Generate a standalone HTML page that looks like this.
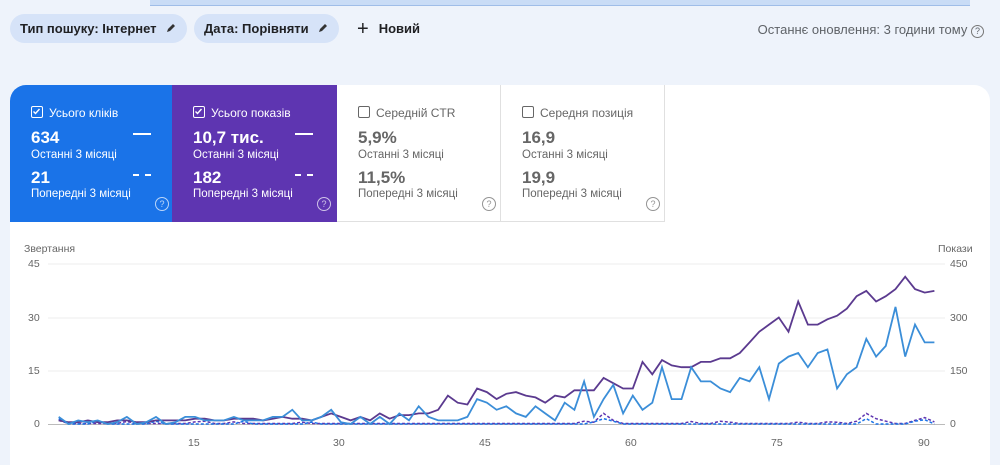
<!DOCTYPE html><html><head><meta charset="utf-8"><style>
*{margin:0;padding:0;box-sizing:border-box}
body{width:1000px;height:456px;overflow:hidden;background:#eef3fb;font-family:"Liberation Sans",sans-serif;position:relative}
.band{position:absolute;left:150px;top:0;width:820px;height:6px;background:#c9dcf6;border-bottom:1px solid #9fbde8}
.chip{position:absolute;top:14px;height:29px;border-radius:15px;background:#d6e3f8;font-size:13px;font-weight:bold;color:#202124;line-height:29px;padding-left:10px}
.chip svg{position:absolute;right:10px;top:8px}
.card{position:absolute;left:10px;top:85px;width:980px;height:380px;background:#fff;border-radius:16px 16px 0 0}
.m{position:absolute;top:85px;height:137px;width:165px;font-size:11.5px}
.m .l{position:absolute;left:21px;top:21px;font-size:12px}
.m .cb{display:inline-block;width:12px;height:12px;border:1.5px solid currentColor;border-radius:2px;vertical-align:-1px;margin-right:6px;position:relative}
.m .cb svg{position:absolute;left:0;top:0}
.m .v{position:absolute;left:21px;font-size:17px;font-weight:bold}
.m .s{position:absolute;left:21px}
.m .q{position:absolute;left:145px;top:112px;width:14px;height:14px;border:1px solid currentColor;border-radius:50%;font-size:9px;text-align:center;line-height:12px;opacity:.7}
.m .dash{position:absolute;left:123px;width:18px;height:2px;background:#fff}
.ax{position:absolute;font-size:10.5px;color:#666}
</style></head><body>
<div class="band"></div>
<div class="chip" style="left:10px;width:177px">Тип пошуку: Інтернет<svg width="12" height="12" viewBox="0 0 12 12"><path d="M2 10l1-3 5-5 2 2-5 5z" fill="#333"/></svg></div>
<div class="chip" style="left:194px;width:145px">Дата: Порівняти<svg width="12" height="12" viewBox="0 0 12 12"><path d="M2 10l1-3 5-5 2 2-5 5z" fill="#333"/></svg></div>
<div style="position:absolute;left:357px;top:14px;line-height:29px;font-size:13px;font-weight:bold;color:#202124"><span style="font-size:20px;font-weight:normal;vertical-align:-2px;margin-right:10px">+</span>Новий</div>
<div style="position:absolute;right:16px;top:22px;font-size:13px;color:#5f6368">Останнє оновлення: 3 години тому <span style="display:inline-block;width:13px;height:13px;border:1px solid #777;border-radius:50%;font-size:9px;text-align:center;line-height:11px">?</span></div>
<div class="card"></div>
<div class="m" style="left:10px;background:#1a73e8;color:#fff;border-radius:16px 0 0 0;width:162px">
<div class="l"><span class="cb"><svg width="9" height="9" viewBox="0 0 9 9"><path d="M1.5 4.5l2 2 4-4.5" stroke="#fff" stroke-width="1.4" fill="none"/></svg></span>Усього кліків</div>
<div class="v" style="top:43px">634</div><div class="dash" style="top:48px"></div>
<div class="s" style="top:64px">Останні 3 місяці</div>
<div class="v" style="top:83px">21</div><div class="dash" style="top:89px;background:none;border-top:2px dashed #fff"></div>
<div class="s" style="top:103px">Попередні 3 місяці</div><div class="q">?</div></div>
<div class="m" style="left:172px;background:#5e35b1;color:#fff">
<div class="l"><span class="cb"><svg width="9" height="9" viewBox="0 0 9 9"><path d="M1.5 4.5l2 2 4-4.5" stroke="#fff" stroke-width="1.4" fill="none"/></svg></span>Усього показів</div>
<div class="v" style="top:43px">10,7 тис.</div><div class="dash" style="top:48px"></div>
<div class="s" style="top:64px">Останні 3 місяці</div>
<div class="v" style="top:83px">182</div><div class="dash" style="top:89px;background:none;border-top:2px dashed #fff"></div>
<div class="s" style="top:103px">Попередні 3 місяці</div><div class="q">?</div></div>
<div class="m" style="left:337px;color:#666;border-right:1px solid #e0e0e0;border-bottom:1px solid #e0e0e0;width:164px">
<div class="l"><span class="cb"></span>Середній CTR</div>
<div class="v" style="top:43px">5,9%</div>
<div class="s" style="top:64px">Останні 3 місяці</div>
<div class="v" style="top:83px">11,5%</div>
<div class="s" style="top:103px">Попередні 3 місяці</div><div class="q">?</div></div>
<div class="m" style="left:501px;color:#666;border-right:1px solid #e0e0e0;border-bottom:1px solid #e0e0e0;width:164px">
<div class="l"><span class="cb"></span>Середня позиція</div>
<div class="v" style="top:43px">16,9</div>
<div class="s" style="top:64px">Останні 3 місяці</div>
<div class="v" style="top:83px">19,9</div>
<div class="s" style="top:103px">Попередні 3 місяці</div><div class="q">?</div></div>
<div class="ax" style="left:24px;top:243px">Звертання</div>
<div class="ax" style="left:938px;top:243px">Покази</div>
<div class="ax" style="left:28px;top:258px">45</div><div class="ax" style="left:28px;top:312px">30</div><div class="ax" style="left:28px;top:365px">15</div><div class="ax" style="left:34px;top:418px">0</div>
<div class="ax" style="left:950px;top:258px">450</div><div class="ax" style="left:950px;top:312px">300</div><div class="ax" style="left:950px;top:365px">150</div><div class="ax" style="left:950px;top:418px">0</div>
<div class="ax" style="left:188px;top:437px">15</div><div class="ax" style="left:333px;top:437px">30</div><div class="ax" style="left:479px;top:437px">45</div><div class="ax" style="left:625px;top:437px">60</div><div class="ax" style="left:771px;top:437px">75</div><div class="ax" style="left:918px;top:437px">90</div>
<svg id="ch" width="1000" height="456" style="position:absolute;left:0;top:0">
<g stroke="#eee" stroke-width="1"><line x1="48" y1="264" x2="945" y2="264"/><line x1="48" y1="318" x2="945" y2="318"/><line x1="48" y1="371" x2="945" y2="371"/></g>
<line x1="48" y1="424.5" x2="945" y2="424.5" stroke="#bbb"/>
</svg>
<script>
var P=[1,0.5,0.5,1,0.5,0.5,1,1,0.5,0.5,1,1,1,1,1.5,1.5,1,1,1.5,1.5,1.5,1,1.5,2,1.5,1.5,1,2,3,2,1,2,1,3,1.5,2.5,2.5,3,3,4,8,6,5.5,10,9,7,8.5,9,8,7.5,6,8,7.5,9.5,9.5,9.5,13,11.5,10,10,17.5,14,18,16.5,16,16,17.5,17.5,18.5,18.5,20,23,26,28,30,26,34.5,28,28,29.5,30.5,32.5,36,37.5,34.5,36,38,41.5,38,37,37.5];
var B=[2,0,1,0.5,1,0,0.5,2,0,0.5,2,0,0.5,2,2,1,1,1,2,1,1,1,2,2,4,1,1,2,4,0.5,0,2,0,2,0,3,1,5,2,1,1,1,2,7,6,4,5,3,2,5,3,1,6,4,12,2,7,11,3,8,4,6,16,7,7,16,12,12,10,9,13,12,16,7,17,19,20,16,20,21,10,14,16,24,19,22,33,19,28,23,23];
var D={1:1,8:0.7,15:0.6,16:0.8,19:0.6,26:0.5,55:0.8,56:0.5,57:3,58:1,66:0.7,69:0.8,70:0.5,77:0.5,80:0.6,81:0.5,83:0.8,84:3,85:1.5,86:0.8,89:1,90:1.8,91:0.6};
var E={1:1.5,5:0.8,11:0.8,20:0.8,27:0.5,56:0.6,57:1.5,58:0.8,84:1.5,89:0.8,90:1.2};
function pts(a,f){return a.map(function(v,i){return (49+(i+1)*9.73).toFixed(1)+","+(424-f(v,i)*3.55).toFixed(1)}).join(" ")}
var s=document.getElementById("ch"),ns="http://www.w3.org/2000/svg";
function pl(p,c,w,d){var e=document.createElementNS(ns,"polyline");e.setAttribute("points",p);e.setAttribute("fill","none");e.setAttribute("stroke",c);e.setAttribute("stroke-width",w);if(d)e.setAttribute("stroke-dasharray",d);s.appendChild(e)}
pl(pts(P,function(v,i){return D[i+1]||0.15}),"#5e35b1",1.5,"3,2");
pl(pts(B,function(v,i){return E[i+1]||0}),"#1a73e8",1.5,"3,2");
pl(pts(P,function(v){return v}),"#5b3a8f",1.8);
pl(pts(B,function(v){return v}),"#3b8ed8",1.8);
</script>
</body></html>
